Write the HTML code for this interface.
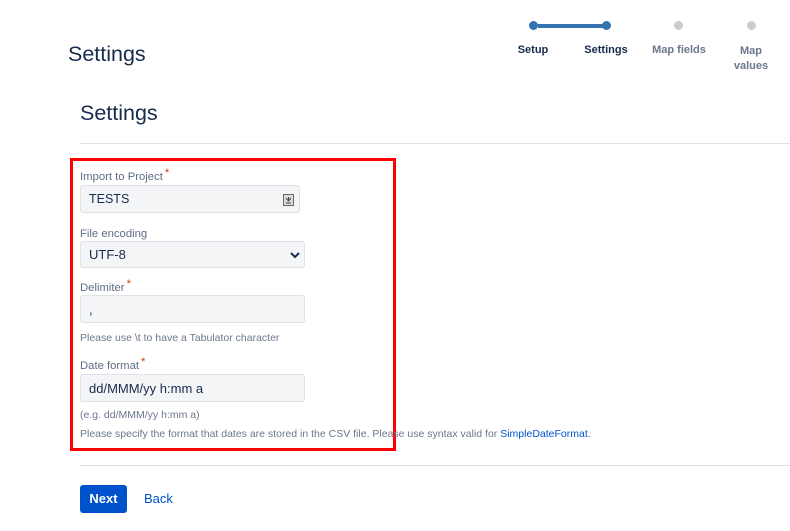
<!DOCTYPE html>
<html><head><style>
body{margin:0;width:790px;height:531px;background:#fff;font-family:"Liberation Sans",sans-serif;color:#172b4d;position:relative;overflow:hidden}
.a{position:absolute}
.lbl{font-size:11.3px;color:#5e6c84;}
.lbl b{color:#de350b;font-weight:normal;position:relative;top:-4px;margin-left:2px}
.in{position:absolute;background:#f4f5f7;border:1px solid #dfe1e6;border-radius:3px;box-sizing:border-box;font-size:13px;color:#172b4d;padding-left:8px;display:flex;align-items:center}
.st{position:absolute;font-size:11px;font-weight:bold;text-align:center;width:70px}
.dot{position:absolute;width:9px;height:9px;border-radius:50%}
.help{font-size:10.5px;color:#6b778c}
</style></head><body>
<div class="a" style="left:68px;top:42px;font-size:21.5px;color:#172b4d">Settings</div>
<div class="a" style="left:538px;top:24px;width:70px;height:4px;background:#3572b0"></div>
<div class="dot" style="left:529px;top:21px;background:#3572b0"></div>
<div class="dot" style="left:602px;top:21px;background:#3572b0"></div>
<div class="dot" style="left:674px;top:21px;background:#ccc"></div>
<div class="dot" style="left:747px;top:21px;background:#ccc"></div>
<div class="st" style="left:498px;top:44px;color:#172b4d">Setup</div>
<div class="st" style="left:571px;top:44px;color:#172b4d">Settings</div>
<div class="st" style="left:644px;top:44px;color:#6b778c">Map fields</div>
<div class="st" style="left:716px;top:44px;color:#6b778c;line-height:15px">Map<br>values</div>
<div class="a" style="left:80px;top:101px;font-size:21.5px">Settings</div>
<div class="a" style="left:80px;top:143px;width:710px;height:1px;background:#dfe1e6"></div>
<div class="a" style="left:70px;top:158px;width:320px;height:287px;border:3px solid #f00"></div>
<div class="a lbl" style="left:80px;top:171px">Import to Project<b>*</b></div>
<div class="in" style="left:80px;top:185px;width:220px;height:28px;font-size:12.5px">TESTS
<svg class="a" style="left:202px;top:8px" width="11" height="12"><rect x=".5" y=".5" width="10" height="11" fill="#ddd" stroke="#666"/><path d="M3 4l2.5 3 2.5-3M5.5 3v4M3 9h5" stroke="#444" fill="none"/></svg></div>
<div class="a lbl" style="left:80px;top:228px">File encoding</div>
<div class="in" style="left:80px;top:241px;width:225px;height:27px">UTF-8
<svg class="a" style="left:209px;top:10px" width="10" height="7"><path d="M1 1l4 4 4-4" stroke="#172b4d" stroke-width="2" fill="none"/></svg></div>
<div class="a lbl" style="left:80px;top:282px">Delimiter<b>*</b></div>
<div class="in" style="left:80px;top:295px;width:225px;height:28px">,</div>
<div class="a help" style="left:80px;top:332px">Please use \t to have a Tabulator character</div>
<div class="a lbl" style="left:80px;top:360px">Date format<b>*</b></div>
<div class="in" style="left:80px;top:374px;width:225px;height:28px">dd/MMM/yy h:mm a</div>
<div class="a help" style="left:80px;top:409px">(e.g. dd/MMM/yy h:mm a)</div>
<div class="a help" style="left:80px;top:428px">Please specify the format that dates are stored in the CSV file. Please use syntax valid for <span style="color:#0052cc">SimpleDateFormat</span>.</div>
<div class="a" style="left:80px;top:465px;width:710px;height:1px;background:#dfe1e6"></div>
<div class="a" style="left:80px;top:485px;width:47px;height:28px;background:#0052cc;border-radius:3px;color:#fff;font-size:13px;font-weight:bold;text-align:center;line-height:28px">Next</div>
<div class="a" style="left:144px;top:491px;font-size:13px;color:#0052cc">Back</div>
</body></html>
